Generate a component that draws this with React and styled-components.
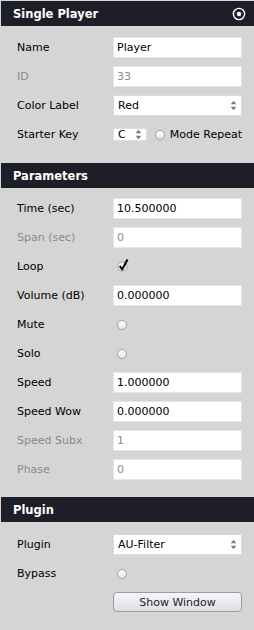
import React from "react";
import styled, { createGlobalStyle } from "styled-components";

const Global = createGlobalStyle`
  html, body { margin: 0; padding: 0; background: #d5d5d5; }
  body { font-family: "DejaVu Sans", "Liberation Sans", sans-serif; font-size: 11px; color: #000; }
`;

const Panel = styled.div`
  width: 253px;
  margin-left: 1px;
  padding-top: 1px;
  display: flex;
  flex-direction: column;
`;

const Header = styled.div`
  height: 25px;
  background: #1e1e28;
  color: #fff;
  font-weight: bold;
  font-size: 11.5px;
  display: flex;
  align-items: center;
  justify-content: space-between;
  padding: 0 8px 0 12px;
`;

const Body = styled.div`
  display: grid;
  grid-template-columns: 96px 129px;
  grid-auto-rows: 21px;
  row-gap: 8px;
  padding: ${(p) => p.$pt || 11}px 12px ${(p) => p.$pb || 17}px 16px;
`;

const Label = styled.div`
  display: flex;
  align-items: center;
  color: ${(p) => (p.$disabled ? "#8a8a8a" : "#000")};
  white-space: nowrap;
`;

const Field = styled.div`
  background: #fff;
  display: flex;
  align-items: center;
  padding-left: 4px;
  color: ${(p) => (p.$disabled ? "#8c8c8c" : "#000")};
  box-shadow: inset 0 0 0 1px #e6e6e6;
`;

const Popup = styled.div`
  background: #fff;
  display: flex;
  align-items: center;
  justify-content: space-between;
  padding: 0 5px 0 5px;
  width: ${(p) => (p.$w ? `${p.$w}px` : "auto")};
  box-sizing: border-box;
  box-shadow: inset 0 0 0 1px #dcdcdc;
`;

const Inline = styled.div`
  display: flex;
  align-items: center;
  gap: 8px;
`;

const Cell = styled.div`
  display: flex;
  align-items: center;
  padding-left: 4px;
`;

const ModeLabel = styled.span`
  display: flex;
  align-items: center;
  gap: 5px;
  white-space: nowrap;
`;

const Radio = styled.span`
  width: 10px;
  height: 10px;
  border-radius: 50%;
  border: 1px solid #a0a0aa;
  background: linear-gradient(#ffffff, #e6e6f0);
  display: inline-block;
  box-sizing: border-box;
`;

const Button = styled.button`
  grid-column: 2;
  height: 20px;
  border: 1px solid #9c9c9c;
  border-radius: 4px;
  background: linear-gradient(#f6f6fa, #dedee6);
  font-family: inherit;
  font-size: 11px;
  color: #222;
  padding: 0;
`;

const Arrows = () => (
  <svg width="7" height="11" viewBox="0 0 7 11">
    <path d="M3.5 0.8 L6.3 4.2 L0.7 4.2 Z" fill="#7a7a7a" />
    <path d="M3.5 10.2 L6.3 6.8 L0.7 6.8 Z" fill="#7a7a7a" />
  </svg>
);

const TargetIcon = () => (
  <svg width="14" height="14" viewBox="0 0 14 14">
    <circle cx="7" cy="7" r="5.6" fill="none" stroke="#fff" strokeWidth="1.4" />
    <circle cx="7" cy="7" r="2.2" fill="#fff" />
  </svg>
);

const Check = () => (
  <svg width="14" height="14" viewBox="0 0 14 14" style={{ marginTop: -4 }}>
    <circle cx="5.5" cy="8.5" r="4.6" fill="#eeeef4" stroke="#a0a0aa" strokeWidth="1" />
    <path d="M2.8 8 L5.2 11.5 L10.5 1.5" fill="none" stroke="#000" strokeWidth="2" strokeLinejoin="round" />
  </svg>
);

const Row = ({ label, disabled, children }) => (
  <>
    <Label $disabled={disabled}>{label}</Label>
    {children}
  </>
);

export default function App() {
  return (
    <>
      <Global />
      <Panel>
        <Header>
          <span>Single Player</span>
          <TargetIcon />
        </Header>
        <Body $pt={11} $pb={18}>
          <Row label="Name"><Field>Player</Field></Row>
          <Row label="ID" disabled><Field $disabled>33</Field></Row>
          <Row label="Color Label"><Popup>Red<Arrows /></Popup></Row>
          <Row label="Starter Key">
            <Inline>
              <Popup $w={35}>C<Arrows /></Popup>
              <ModeLabel><Radio />Mode Repeat</ModeLabel>
            </Inline>
          </Row>
        </Body>

        <Header>
          <span>Parameters</span>
        </Header>
        <Body $pt={10} $pb={17}>
          <Row label="Time (sec)"><Field>10.500000</Field></Row>
          <Row label="Span (sec)" disabled><Field $disabled>0</Field></Row>
          <Row label="Loop"><Cell><Check /></Cell></Row>
          <Row label="Volume (dB)"><Field>0.000000</Field></Row>
          <Row label="Mute"><Cell><Radio /></Cell></Row>
          <Row label="Solo"><Cell><Radio /></Cell></Row>
          <Row label="Speed"><Field>1.000000</Field></Row>
          <Row label="Speed Wow"><Field>0.000000</Field></Row>
          <Row label="Speed Subx" disabled><Field $disabled>1</Field></Row>
          <Row label="Phase" disabled><Field $disabled>0</Field></Row>
        </Body>

        <Header>
          <span>Plugin</span>
        </Header>
        <Body $pt={12} $pb={17}>
          <Row label="Plugin"><Popup>AU-Filter<Arrows /></Popup></Row>
          <Row label="Bypass"><Cell><Radio /></Cell></Row>
          <Button>Show Window</Button>
        </Body>
      </Panel>
    </>
  );
}
